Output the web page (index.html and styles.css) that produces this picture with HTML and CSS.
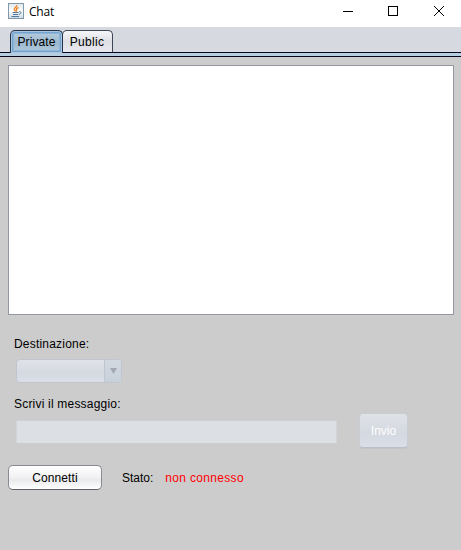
FILE: index.html
```html
<!DOCTYPE html>
<html lang="it">
<head>
<meta charset="utf-8">
<title>Chat</title>
<link rel="stylesheet" href="styles.css">
</head>
<body>
<header class="titlebar">
  <svg class="logo" width="16" height="16" viewBox="0 0 16 16">
    <defs><linearGradient id="g" x2="0" y2="1"><stop offset="0" stop-color="#dfe7ed"/><stop offset=".5" stop-color="#fff"/><stop offset="1" stop-color="#cbd9e4"/></linearGradient></defs>
    <rect x=".5" y=".5" width="15" height="15" fill="url(#g)" stroke="#8299ab"/>
    <path d="M8.800 2c.6 2-3.300 2.700-2.500 4.700.3.700 1 1 1 1.700M10.500 4.500C8.500 5.400 8 6 8.500 6.900c.3.600 0 1.100-.4 1.500" fill="none" stroke="#ee8428" stroke-width="1.400"/>
    <path d="M4.500 9.500h6.200M5 11.500h5M3.500 13.500h7.500M11 8.700c3-.6 2.500 2.300-.2 2.700" fill="none" stroke="#50799b"/>
  </svg>
  <h1 class="title">Chat</h1>
  <svg class="controls" width="106" height="12" viewBox="0 0 106 12" fill="none" stroke="#000">
    <path d="M1 6.500h10"/>
    <rect x="46.500" y="1.500" width="9" height="9"/>
    <path d="M92 1l10 10M102 1L92 11"/>
  </svg>
</header>
<nav class="tabs">
  <div class="tab tab-active">Private</div>
  <div class="tab tab-public">Public</div>
</nav>
<div class="divider"></div>
<main class="panel">
  <div class="log"></div>
  <label class="label label-dest">Destinazione:</label>
  <div class="combo"><span class="combo-arrow"><svg width="7" height="6" viewBox="0 0 7 6"><path d="M0 0h7L3.500 6z" fill="#a3a8b0"/></svg></span></div>
  <label class="label label-msg">Scrivi il messaggio:</label>
  <div class="row">
    <div class="field"></div>
    <div class="send">Invio</div>
  </div>
  <div class="status-row">
    <div class="connect">Connetti</div>
    <span class="status-label">Stato:</span>
    <span class="status">non connesso</span>
  </div>
</main>
</body>
</html>
```
FILE: styles.css
```css
* { box-sizing: border-box; }
body {
  margin: 0;
  width: 461px;
  height: 550px;
  overflow: hidden;
  background: #ccc;
  color: #000;
  font: 12px/16px "Liberation Sans", Arial, sans-serif;
}
.titlebar {
  display: flex;
  height: 27px;
  padding: 3px 13px 0 8px;
  background: #fff;
}
.title {
  margin: 1px 0 0 5px;
  font: 12px/16px "Open Sans", "Noto Sans", sans-serif;
  letter-spacing: -.2px;
}
.controls { margin: 2px 0 0 auto; }
.tabs {
  display: flex;
  height: 25px;
  padding: 3px 0 0 10px;
  background: #d6d9e0;
}
.tab {
  height: 22px;
  border: 1px solid #3e4555;
  border-bottom: 0;
  border-radius: 5px 5px 0 0;
  line-height: 22px;
  text-align: center;
}
/* The selected tab runs one pixel into the divider and hides its top line. */
.tab-active {
  position: relative;
  z-index: 1;
  width: 53px;
  height: 23px;
  border-color: #26324a;
  background: linear-gradient(#bccfdf, #9bb8cf 50%, #b3cadb);
  box-shadow: inset 0 0 0 1px #a9c6de, inset 0 0 0 2px #73a4d1, inset 0 0 0 3px #8fb5d6;
  letter-spacing: .1px;
}
.tab-public {
  width: 51px;
  margin-left: -1px;
  padding-right: 1px;
  background: linear-gradient(#f5f6f8, #dddfe5 50%, #e7e9ee);
  letter-spacing: .3px;
}
.divider {
  height: 5px;
  border: solid #05051b;
  border-width: 1px 0;
  background: #b6cde0;
}
.panel { padding: 8px 7px 0 8px; }
.log {
  height: 250px;
  border: 1px solid #9297a1;
  background: #fff;
}
.label { display: block; margin-left: 6px; }
.label-dest { margin-top: 21px; letter-spacing: .2px; }
.label-msg { margin-top: 13px; letter-spacing: .2px; }
.combo {
  display: flex;
  justify-content: flex-end;
  width: 106px;
  height: 24px;
  margin: 7px 0 0 8px;
  border: 1px solid #c1c6ce;
  border-radius: 4px;
  background: linear-gradient(#e0e2e7, #d5d9e1 60%, #dadee6);
  overflow: hidden;
}
.combo-arrow {
  display: flex;
  justify-content: center;
  width: 17px;
  padding-top: 8px;
  border-left: 1px solid #bdc7d2;
  background: linear-gradient(#d3d9e1, #c8d0db);
}
.row { display: flex; margin-top: 2px; }
.field {
  width: 321px;
  height: 23px;
  margin: 6px 0 0 8px;
  background: #dce0e5;
  box-shadow: inset 0 1px #cbcfd5, inset 1px 0 #d1d4d9, inset -1px 0 #d1d4d9;
}
.send {
  width: 49px;
  height: 35px;
  margin: -1px 0 1px 22px;
  border: 1px solid #c8ccd3;
  border-bottom-color: #b9bec9;
  border-radius: 4px;
  background: linear-gradient(#dfe2e6, #d4d8e0 60%, #dadee6);
  box-shadow: 0 1px #c2c4c9;
  color: #fff;
  line-height: 35px;
  text-align: center;
}
.status-row { display: flex; margin-top: 16px; line-height: 26px; }
.connect {
  width: 94px;
  height: 25px;
  border: 1px solid #888b91;
  border-bottom-color: #5e6168;
  border-radius: 5px;
  background: linear-gradient(#fff, #f1f1f3 50%, #e9eaec 60%, #fff);
  line-height: 24px;
  text-align: center;
  letter-spacing: .1px;
}
.status-label { margin-left: 20px; }
.status { margin-left: 12px; color: #f00; letter-spacing: .32px; }
```
